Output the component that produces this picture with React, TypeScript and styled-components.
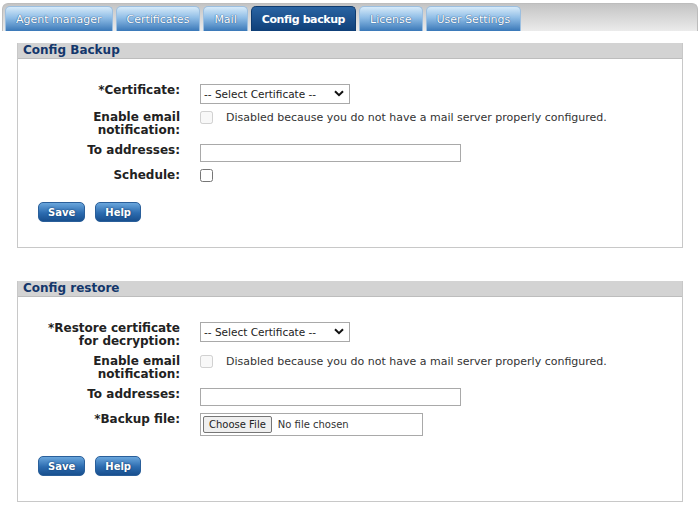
import React from 'react';
import styled, {createGlobalStyle} from 'styled-components';

const GlobalStyle = createGlobalStyle`
    html, body {
        margin: 0;
        padding: 0;
        background: #fff;
    }
    body {
        font-family: "DejaVu Sans", Verdana, sans-serif;
        color: #222;
    }
`;

const tabs = ['Agent manager', 'Certificates', 'Mail', 'Config backup', 'License', 'User Settings'];

const Page = styled.div`
    padding: 3px 2px 0 2px;
    width: 696px;
`;

const TabBar = styled.div`
    display: flex;
    align-items: flex-end;
    gap: 3px;
    height: 28px;
    box-sizing: border-box;
    padding: 3px 0 0 2px;
    border: 1px solid #bdbdbd;
    border-bottom: none;
    border-radius: 6px 6px 0 0;
    background: linear-gradient(#c4c4c4, #ebebeb);
`;

const Tab = styled.div<{active?: boolean}>`
    height: 25px;
    box-sizing: border-box;
    padding: 0 ${p => p.active ? 10 : 10}px;
    display: flex;
    align-items: center;
    font-size: 11px;
    font-weight: ${p => p.active ? 'bold' : 'normal'};
    letter-spacing: ${p => p.active ? '-0.4px' : '0'};
    color: #fff;
    border-radius: 5px 5px 0 0;
    border: 1px solid ${p => p.active ? '#0d3a6e' : '#9cbfe0'};
    border-bottom: none;
    background: ${p => p.active
        ? 'linear-gradient(#2a64a3, #0f3f78)'
        : 'linear-gradient(#d6eaf9 0%, #8fbde6 45%, #3a78b8 100%)'};
    text-shadow: ${p => p.active ? 'none' : '0 0 1px #2a5a90, 0 0 1px #2a5a90'};
`;

const Content = styled.div`
    padding: 12px 15px 0 15px;
    display: flex;
    flex-direction: column;
    gap: 33px;
`;

const Panel = styled.section`
    width: 666px;
    box-sizing: border-box;
    border: 1px solid #c8c8c8;
    border-top: none;
`;

const PanelHeader = styled.h2`
    margin: 0;
    height: 15px;
    line-height: 15px;
    padding: 0 5px;
    background: #d3d3d3;
    border-bottom: 1px solid #bdbdbd;
    font-size: 12px;
    font-weight: bold;
    color: #13376b;
`;

const Body = styled.div`
    padding: 25px 0 25px 20px;
`;

const Form = styled.div`
    display: grid;
    grid-template-columns: 142px 1fr;
    column-gap: 20px;
    row-gap: 7px;
    align-items: start;
`;

const Label = styled.div`
    text-align: right;
    font-size: 12px;
    font-weight: bold;
    line-height: 13px;
    color: #222;
`;

const Field = styled.div`
    display: flex;
    align-items: center;
    gap: 13px;
    font-size: 11px;
    line-height: 13px;
    color: #333;
`;

const SelectWrap = styled.div`
    position: relative;
    width: 150px;
    height: 20px;
`;

const Select = styled.select`
    appearance: none;
    display: block;
    width: 100%;
    height: 100%;
    box-sizing: border-box;
    border: 1px solid #a9a9a9;
    border-radius: 0;
    background: #fff;
    padding: 0 0 0 3px;
    font-family: "DejaVu Sans", Verdana, sans-serif;
    font-size: 10.5px;
    color: #222;
`;

const Chevron = styled.svg`
    position: absolute;
    right: 6px;
    top: 6px;
    pointer-events: none;
`;

const Check = styled.input`
    display: block;
    margin: 0;
    width: 13px;
    height: 13px;
`;

const TextInput = styled.input`
    display: block;
    width: 261px;
    height: 18px;
    box-sizing: border-box;
    border: 1px solid #a9a9a9;
    margin: 0;
`;

const FileInput = styled.input`
    display: block;
    width: 223px;
    height: 23px;
    box-sizing: border-box;
    border: 1px solid #a9a9a9;
    margin: 0;
    padding: 2px;
    font-family: "DejaVu Sans", Verdana, sans-serif;
    font-size: 10px;
    color: #333;
    &::file-selector-button {
        font-family: "DejaVu Sans", Verdana, sans-serif;
        font-size: 10px;
        height: 17px;
        padding: 0 5px;
        margin-right: 6px;
        border: 1px solid #767676;
        border-radius: 2px;
        background: #efefef;
        color: #222;
    }
`;

const Buttons = styled.div`
    display: flex;
    gap: 10px;
    margin-top: 20px;
`;

const Button = styled.button`
    height: 20px;
    padding: 0 9px;
    border: 1px solid #2a5f9a;
    border-radius: 5px;
    background: linear-gradient(#6aa6dc, #2c6cb0 55%, #184f8e);
    color: #fff;
    font-family: "DejaVu Sans", Verdana, sans-serif;
    font-size: 10px;
    font-weight: bold;
    text-shadow: 0 0 2px #0b2f5c;
`;

const CertSelect: React.FC = () => (
    <SelectWrap>
        <Select defaultValue="">
            <option value="">-- Select Certificate --</option>
        </Select>
        <Chevron width="10" height="7" viewBox="0 0 10 7">
            <path d="M1 1.2 L5 5.2 L9 1.2" fill="none" stroke="#111" strokeWidth="2" />
        </Chevron>
    </SelectWrap>
);

const MailRow: React.FC = () => (
    <>
        <Label>Enable email<br />notification:</Label>
        <Field>
            <Check type="checkbox" disabled />
            <span>Disabled because you do not have a mail server properly configured.</span>
        </Field>
        <Label>To addresses:</Label>
        <Field><TextInput type="text" /></Field>
    </>
);

const ActionButtons: React.FC = () => (
    <Buttons>
        <Button>Save</Button>
        <Button>Help</Button>
    </Buttons>
);

const App: React.FC = () => {
    return (
        <Page>
            <GlobalStyle />
            <TabBar>
                {tabs.map(t => (
                    <Tab key={t} active={t === 'Config backup'}>{t}</Tab>
                ))}
            </TabBar>
            <Content>
                <Panel>
                    <PanelHeader>Config Backup</PanelHeader>
                    <Body>
                        <Form>
                            <Label>*Certificate:</Label>
                            <Field><CertSelect /></Field>
                            <MailRow />
                            <Label>Schedule:</Label>
                            <Field><Check type="checkbox" /></Field>
                        </Form>
                        <ActionButtons />
                    </Body>
                </Panel>
                <Panel>
                    <PanelHeader>Config restore</PanelHeader>
                    <Body>
                        <Form>
                            <Label>*Restore certificate<br />for decryption:</Label>
                            <Field><CertSelect /></Field>
                            <MailRow />
                            <Label>*Backup file:</Label>
                            <Field><FileInput type="file" /></Field>
                        </Form>
                        <ActionButtons />
                    </Body>
                </Panel>
            </Content>
        </Page>
    );
};

export default App;
